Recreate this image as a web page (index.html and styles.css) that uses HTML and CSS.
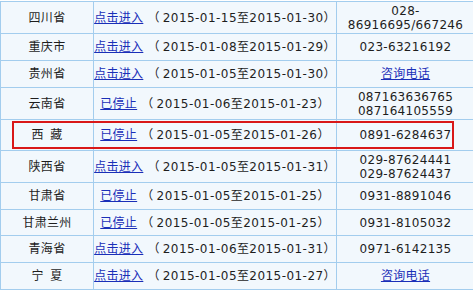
FILE: index.html
```html
<!DOCTYPE html>
<html lang="zh-CN">
<head>
<meta charset="utf-8">
<title>报名时间</title>
<link rel="stylesheet" href="styles.css">
</head>
<body>
<div class="tbl">
  <div class="c"><p class="t">四川省</p></div>
  <div class="c"><p class="t"><a href="#">点击进入</a> （<span>2015-01-15</span>至<span>2015-01-30</span>）</p></div>
  <div class="c"><p class="t">028-<br>86916695/667246</p></div>

  <div class="c"><p class="t">重庆市</p></div>
  <div class="c"><p class="t"><a href="#">点击进入</a> （<span>2015-01-08</span>至<span>2015-01-29</span>）</p></div>
  <div class="c"><p class="t">023-63216192</p></div>

  <div class="c"><p class="t">贵州省</p></div>
  <div class="c"><p class="t"><a href="#">点击进入</a> （<span>2015-01-05</span>至<span>2015-01-30</span>）</p></div>
  <div class="c"><p class="t"><a href="#">咨询电话</a></p></div>

  <div class="c"><p class="t">云南省</p></div>
  <div class="c"><p class="t"><a href="#">已停止</a> （<span>2015-01-06</span>至<span>2015-01-23</span>）</p></div>
  <div class="c"><p class="t">087163636765<br>087164105559</p></div>

  <div class="c"><p class="t">西&ensp;藏</p></div>
  <div class="c"><p class="t"><a href="#">已停止</a> （<span>2015-01-05</span>至<span>2015-01-26</span>）</p></div>
  <div class="c"><p class="t">0891-6284637</p></div>

  <div class="c"><p class="t">陕西省</p></div>
  <div class="c"><p class="t"><a href="#">点击进入</a> （<span>2015-01-05</span>至<span>2015-01-31</span>）</p></div>
  <div class="c"><p class="t">029-87624441<br>029-87624437</p></div>

  <div class="c"><p class="t">甘肃省</p></div>
  <div class="c"><p class="t"><a href="#">已停止</a> （<span>2015-01-05</span>至<span>2015-01-25</span>）</p></div>
  <div class="c"><p class="t">0931-8891046</p></div>

  <div class="c"><p class="t">甘肃兰州</p></div>
  <div class="c"><p class="t"><a href="#">已停止</a> （<span>2015-01-05</span>至<span>2015-01-25</span>）</p></div>
  <div class="c"><p class="t">0931-8105032</p></div>

  <div class="c"><p class="t">青海省</p></div>
  <div class="c"><p class="t"><a href="#">点击进入</a> （<span>2015-01-06</span>至<span>2015-01-31</span>）</p></div>
  <div class="c"><p class="t">0971-6142135</p></div>

  <div class="c"><p class="t">宁&ensp;夏</p></div>
  <div class="c"><p class="t"><a href="#">点击进入</a> （<span>2015-01-05</span>至<span>2015-01-27</span>）</p></div>
  <div class="c"><p class="t"><a href="#">咨询电话</a></p></div>

  <div class="mark"></div>
</div>
</body>
</html>
```
FILE: styles.css
```css
html, body {
  overflow: hidden;
}
body {
  margin: 0;
  padding-top: 1px;
  background: #ffffff;
  color: #1e1e1e;
  font-family: "DejaVu Sans", "Noto Sans CJK SC", sans-serif;
  font-size: 12px;
  line-height: 14px;
  letter-spacing: 0.3px;
}
.tbl {
  position: relative;
  display: grid;
  grid-template-columns: 93px 243px 138px;
  grid-template-rows: 32px 27px 27px 32px 31px 32px 27px 26px 27px 27px;
  width: max-content;
  border-top: 1px solid #a3cdee;
  border-left: 1px solid #a3cdee;
  background: #f2f8fd;
}
.c {
  display: flex;
  align-items: center;
  justify-content: center;
  border-right: 1px solid #a3cdee;
  border-bottom: 1px solid #a3cdee;
  text-align: center;
  white-space: nowrap;
}
.t {
  margin: 0;
}
.t span {
  letter-spacing: 0.45px;
}
.t span:first-of-type {
  margin-left: 3px;
}
.t a {
  color: #1a2fb8;
  text-decoration: underline;
}
.mark {
  position: absolute;
  left: 11px;
  top: 119px;
  width: 442px;
  height: 28px;
  box-sizing: border-box;
  border: 2px solid #d91818;
  pointer-events: none;
}
```
